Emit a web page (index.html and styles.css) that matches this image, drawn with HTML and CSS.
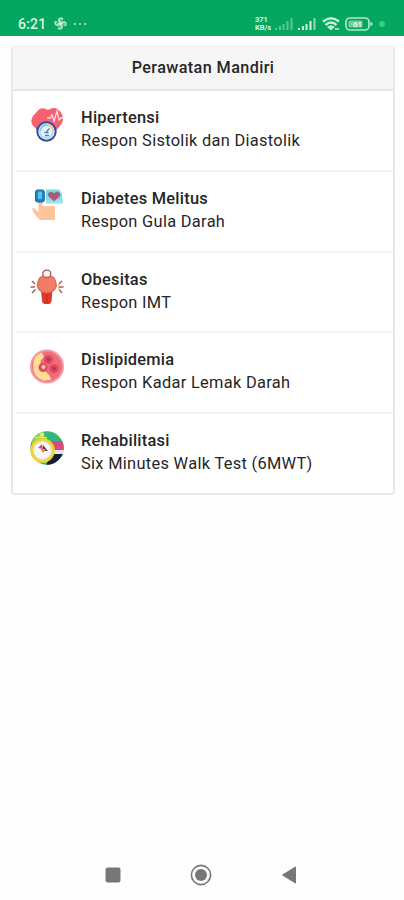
FILE: index.html
```html
<!DOCTYPE html>
<html lang="id">
<head>
<meta charset="utf-8">
<title>Perawatan Mandiri</title>
<link rel="stylesheet" href="styles.css">
</head>
<body>
<header class="status">
  <span class="clock">6:21</span>
  <svg class="fan" width="15" height="15" viewBox="0 0 15 15" fill="#a5e3c1"><path d="M7.500 7C3.500 6 4.500 1 8.500 1.200q3 .6 1 3zM8 7.500C9 3.500 14 4.500 13.800 8.500q-.6 3-3 1zM7.500 8C11.500 9 10.500 14 6.500 13.800q-3-.6-1-3zM7 7.500C6 11.500 1 10.500 1.200 6.500q.6-3 3-1z"/><circle cx="7.500" cy="7.500" r="1.600" fill="#d9f7e5"/><path d="M8 3v2M12 8h-2M7 12v-2M3 7h2" stroke="#05a660"/></svg>
  <span class="dots"><i></i><i></i><i></i></span>
  <span class="speed"><b>371</b><b>KB/s</b></span>
  <svg class="sim1" width="18" height="12" viewBox="0 0 18 12" fill="#5cc78f"><path d="M0 10h2v2H0zM4 8h2v4H4zM7.500 6h2v6h-2zM11.500 3h2v9h-2zM15.500 0h2v12h-2z"/></svg>
  <svg class="sim2" width="18" height="12" viewBox="0 0 18 12" fill="#d0f4df"><path d="M0 10h2v2H0zM4 8h2v4H4zM7.500 6h2v6h-2zM11.500 3h2v9h-2z"/><path d="M15.500 0h2v12h-2z" fill="#8cdbae"/></svg>
  <svg class="wifi" width="18" height="14" viewBox="0 0 18 14" fill="none" stroke="#c9f2da" stroke-width="2.400"><path d="M1 4.500Q9-2 17 4.500M3.500 8Q9 3 14.500 8M6 10.800Q9 8.200 12 10.800"/><path d="M7.500 11.500h3L9 13z" fill="#c9f2da" stroke-width="1"/><path d="M13 12h4" stroke-width="1.500"/></svg>
  <svg class="battery" width="28" height="14" viewBox="0 0 28 14"><rect x="1" y="1" width="23" height="12" rx="4" fill="none" stroke="#b3e9cb" stroke-width="1.600"/><rect x="3.500" y="3.500" width="14" height="7" rx="1.500" fill="#74cd9e"/><path d="M25.500 4.500L28 7l-2.500 2.500z" fill="#b3e9cb"/><text class="level" x="12.500" y="10" text-anchor="middle">61</text></svg>
  <span class="live"></span>
</header>

<main class="card">
  <h1 class="title">Perawatan Mandiri</h1>
  <ul class="list">
    <li class="row">
      <svg class="icon" viewBox="0 0 36 38">
        <path d="M16 33L2.500 18Q0 14 3 9L9 2.500Q13 0 18 3Q24-.5 28 2.500Q33.500 7 33 13Q32 18 26 23z" fill="#f5616f"/>
        <path d="M17 11h3l2-3 2 6 3-10 2 9 2-2h2" fill="none" stroke="#ffdfe3" stroke-width="1.300"/>
        <circle cx="16.500" cy="24.500" r="9.200" fill="#e8f6fa" stroke="#3847b0" stroke-width="2"/>
        <circle cx="16.500" cy="24.500" r="6.500" fill="none" stroke="#a8e3e8" stroke-width="2"/>
        <path d="M16.500 18q6 0 6.500 6" fill="none" stroke="#f3cf6b" stroke-width="1.800"/>
        <path d="M10.500 23.500q1-5 6-5.500" fill="none" stroke="#74cde5" stroke-width="1.500"/>
        <path d="M16.500 24.500l3-3M14.500 25.500h4M15 28.500h4" stroke="#5475bd" stroke-width="1.300"/>
      </svg>
      <div class="text"><strong>Hipertensi</strong><span>Respon Sistolik dan Diastolik</span></div>
    </li>
    <li class="row">
      <svg class="icon" viewBox="0 0 36 38">
        <path d="M2 20q4 0 6.500 5V14q2-3 4 1v3h11q1.500 0 1.500 2v12H10.500Q4 28 2 20z" fill="#fbc49b"/>
        <path d="M16 1.500h13l3 4v8H16z" fill="#82d6df"/>
        <rect x="16" y="11.500" width="17" height="4" fill="#9be2e5"/>
        <path d="M24 13l-5.500-5q-1-3.500 2-4 2.500 0 3.500 2 1-2 3.500-2 3 .5 2 4z" fill="#b9546c" stroke="#6776a2" stroke-width=".8"/>
        <rect x="5.500" y="2" width="8.800" height="12" rx="2" fill="#1f86be" stroke="#17659d"/>
        <rect x="8" y="3.500" width="4" height="7.500" rx="1" fill="#59c1eb"/>
      </svg>
      <div class="text"><strong>Diabetes Melitus</strong><span>Respon Gula Darah</span></div>
    </li>
    <li class="row">
      <svg class="icon" viewBox="0 0 36 38">
        <path d="M11.500 21h10.500l-1 11.500q-.5 2-2 2h-4.500q-1.500 0-2-2z" fill="#e83620" stroke="#b83525" stroke-width=".8"/>
        <path d="M16.800 25v9" stroke="#b9301f" stroke-width="1"/>
        <path d="M13 7h8q4 1 4.500 5l1 5-2 4q-3 3-7.700 3t-7.700-3l-2-4 1-5q.500-4 4.900-5z" fill="#f47b66" stroke="#c8625a"/>
        <rect x="12.800" y="1.200" width="8" height="7.300" rx="3.600" fill="#fdeeeb" stroke="#a4645e" stroke-width="1.300"/>
        <path d="M2 12l3 3M.5 18H5M2 24l3.500-3.500M32 12l-3 3M29 18h4.500M29 20.500l3 3.500" stroke="#a8605b" stroke-width="1.500"/>
        <path d="M29 15q-2 3 0 5" stroke="#e3ad5e" fill="none"/>
      </svg>
      <div class="text"><strong>Obesitas</strong><span>Respon IMT</span></div>
    </li>
    <li class="row">
      <svg class="icon" viewBox="0 0 36 38">
        <circle cx="17" cy="17.500" r="16" fill="#f26b77" stroke="#f29ba3" stroke-width="2"/>
        <path d="M12 3.500Q3 7 3 17q0 11 10 14.500l8-.5q-1-5-3-6l-4-4-4-5 1-5 3-3z" fill="#ffdf94"/>
        <circle cx="18.500" cy="10.500" r="4.500" fill="#dc4b60"/><circle cx="18.500" cy="10.500" r="2" fill="#b83954"/>
        <circle cx="24" cy="19.500" r="4.500" fill="#dc4b60"/><circle cx="24" cy="19.500" r="2" fill="#b83954"/>
        <circle cx="13" cy="18.500" r="4.500" fill="#e34c5a"/><circle cx="13.500" cy="18" r="1.900" fill="#ffd2bd"/>
      </svg>
      <div class="text"><strong>Dislipidemia</strong><span>Respon Kadar Lemak Darah</span></div>
    </li>
    <li class="row">
      <svg class="icon" viewBox="0 0 36 38">
        <clipPath id="round"><circle cx="17" cy="18" r="16.700"/></clipPath>
        <g clip-path="url(#round)">
          <path d="M0 0h36v38H0z" fill="#36b578"/>
          <path d="M0 4l10-4 6 8-13 9z" fill="#91cf45"/>
          <path d="M20 11h16v9H22z" fill="#d84c79"/>
          <path d="M21 20h15v4H21z" fill="#dceaf0"/>
          <path d="M21 24h15v14H15z" fill="#171e31"/>
          <circle cx="12" cy="4.500" r="2.300" fill="#e3ec72"/>
          <path d="M5 8l5-1 7 1" fill="none" stroke="#e3e65d" stroke-width="1.600"/>
        </g>
        <circle cx="12.500" cy="20.500" r="10.800" fill="#fff" stroke="#edd632" stroke-width="3"/>
        <circle cx="12.500" cy="20.500" r="8.500" fill="#faf8fc" stroke="#e3dfe8"/>
        <path d="M8 18l4-4 1 5z" fill="#ce5160"/><path d="M13 15l5 6h-5z" fill="#57434f"/><path d="M10.500 19h5.500l-3 4z" fill="#ee8b45"/>
      </svg>
      <div class="text"><strong>Rehabilitasi</strong><span>Six Minutes Walk Test (6MWT)</span></div>
    </li>
  </ul>
</main>

<nav class="nav">
  <svg width="16" height="16" viewBox="0 0 16 16"><rect x=".5" y=".5" width="15" height="15" rx="2.200" fill="#777"/></svg>
  <svg width="22" height="22" viewBox="0 0 22 22"><circle cx="11" cy="11" r="9.600" fill="none" stroke="#777" stroke-width="1.600"/><circle cx="11" cy="11" r="6" fill="#777"/></svg>
  <svg width="16" height="18" viewBox="0 0 16 18"><path d="M1.500 9L14.500 1v16z" fill="#777" stroke="#777" stroke-linejoin="round"/></svg>
</nav>
</body>
</html>
```
FILE: styles.css
```css
* { box-sizing: border-box; }
body {
  margin: 0;
  height: 900px;
  display: flex;
  flex-direction: column;
  background: #fefefe;
  color: #262626;
  font-family: Roboto, "Liberation Sans", sans-serif;
  overflow: hidden;
}
svg { display: block; flex: none; }
.status {
  height: 36px;
  flex: none;
  display: flex;
  align-items: center;
  padding: 11px 19px 0 18px;
  background: #05a660;
  color: #d9f7e5;
}
.clock { width: 35px; font-size: 14px; line-height: 16px; font-weight: 500; letter-spacing: .2px; }
.dots { display: flex; gap: 3px; margin-left: 6px; }
.dots i { width: 2px; height: 2px; border-radius: 50%; background: #b9edd0; }
.speed { margin-left: auto; width: 19px; display: flex; flex-direction: column; font-size: 7.5px; line-height: 7.5px; }
.sim1 { margin-left: 1px; }
.sim2 { margin-left: 5px; }
.wifi { margin-left: 6px; }
.battery { margin-left: 5px; }
.level { font-size: 8px; font-weight: 700; fill: #e3f8eb; }
.live { width: 6px; height: 6px; margin-left: 6px; border-radius: 50%; background: #35d27c; }
.card {
  margin: 10px 9px 0 11px;
  height: 449px;
  flex: none;
  border: 2px solid #e8e8e8;
  border-top: 1px solid #eee;
  border-radius: 4px;
  background: #fff;
}
.title {
  margin: 0;
  height: 44px;
  border-bottom: 2px solid #e6e6e6;
  background: #f6f6f6;
  text-align: center;
  font-size: 16.2px;
  line-height: 42px;
  font-weight: 500;
  letter-spacing: .4px;
}
.list { margin: 0; padding: 0 0 0 3px; list-style: none; }
.row { height: 80.75px; display: flex; padding: 14px 0 0 14px; border-bottom: 2px solid #f3f3f3; }
.row:last-child { border-bottom: 0; }
.icon { width: 36px; height: 38px; margin-top: 2px; }
.text { display: flex; flex-direction: column; margin-left: 15px; padding-top: 1px; font-size: 16.4px; line-height: 23px; letter-spacing: .31px; white-space: nowrap; }
.text strong { font-weight: 500; letter-spacing: .25px; }
.nav { display: flex; align-items: center; justify-content: space-between; height: 50px; margin-top: auto; padding: 0 107px 0 105px; }
```
